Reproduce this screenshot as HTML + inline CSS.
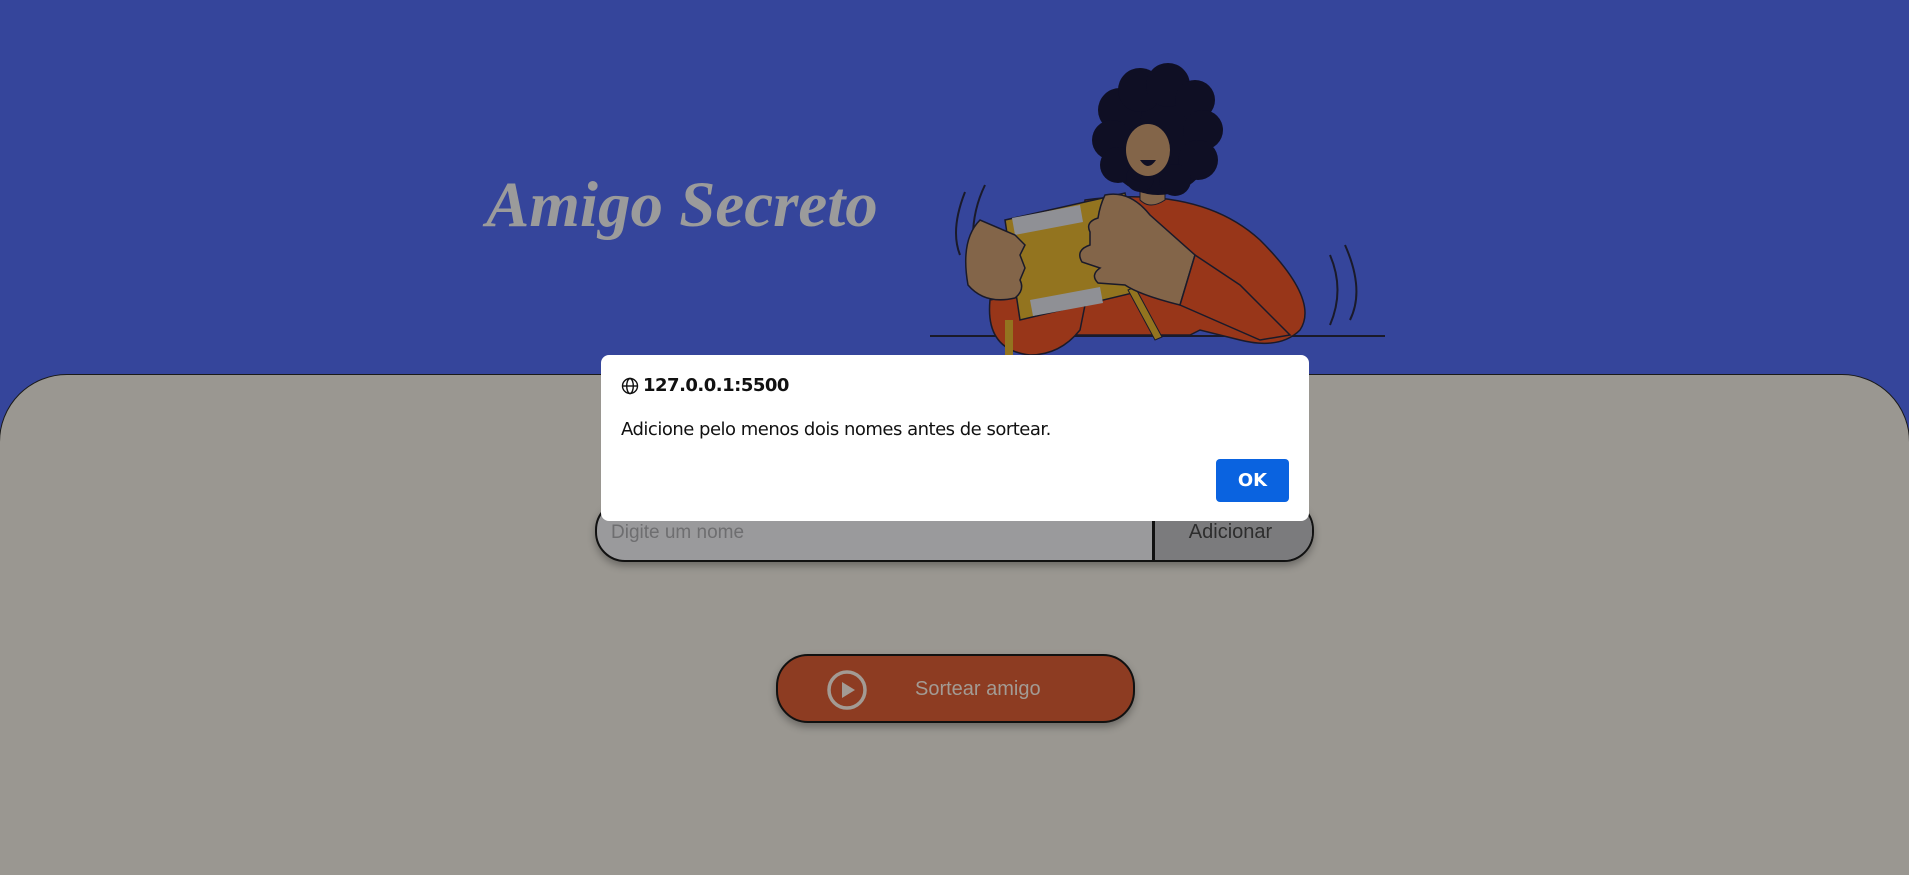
<!DOCTYPE html>
<html><head><meta charset="utf-8"><style>
*{margin:0;padding:0;box-sizing:border-box}
html,body{width:1909px;height:875px;overflow:hidden}
body{background:#35459b;position:relative;font-family:"Liberation Sans",sans-serif}
.main{position:absolute;left:-1px;top:374px;width:1911px;height:540px;background:#9a9791;border:1px solid #1a1a1a;border-radius:68px 68px 0 0}
h1{position:absolute;left:486px;top:168px;font-family:"Liberation Serif",serif;font-style:italic;font-weight:bold;font-size:65px;color:#9b9b9b}
.inp{position:absolute;left:595px;top:500px;width:719px;height:62px;border:2px solid #111;border-radius:30px;background:#9a9a9c;overflow:hidden;box-shadow:0 4px 8px rgba(0,0,0,.3)}
.inp span{position:absolute;left:14px;top:20px;font-size:19px;color:#6e6e70}
.inp .btn{position:absolute;left:555px;top:0;width:164px;height:100%;background:#7b7b7d;border-left:3px solid #111;text-align:center;line-height:60px;font-size:20px;color:#2d2d2d;padding-right:10px}
.sort{position:absolute;left:776px;top:654px;width:359px;height:69px;border:2px solid #111;border-radius:32px;background:#8d3c22;box-shadow:0 4px 8px rgba(0,0,0,.3)}
.sort .t{position:absolute;left:137px;top:22px;font-size:20px;color:#a39b94}
.dlg{position:absolute;left:601px;top:355px;width:708px;height:166px;background:#fff;border-radius:8px;font-family:"DejaVu Sans","Liberation Sans",sans-serif;color:#111}
.dlg .h{position:absolute;left:20px;top:20px;font-weight:bold;font-size:18px;display:flex;align-items:center;gap:4px;letter-spacing:-0.5px}
.dlg .m{position:absolute;left:20px;top:64px;font-size:18px;letter-spacing:-0.5px}
.ok{position:absolute;left:615px;top:104px;width:73px;height:43px;background:#0a63e0;border-radius:4px;color:#fff;font-weight:bold;font-size:18px;text-align:center;line-height:43px}
</style></head><body>
<h1>Amigo Secreto</h1>
<svg style="position:absolute;left:920px;top:60px" width="480" height="310" viewBox="920 60 480 310">
<g stroke="#1a1a2a" stroke-width="2" fill="none">
<path d="M965 192 Q950 230 960 255"/><path d="M985 185 Q968 220 975 260"/>
<path d="M1330 255 Q1345 290 1330 325"/><path d="M1345 245 Q1365 290 1350 320"/>
</g>
<line x1="930" y1="336" x2="1385" y2="336" stroke="#1a1a2a" stroke-width="2"/>
<path d="M1085 200 Q1200 185 1260 240 Q1320 300 1300 330 Q1280 350 1240 340 L1200 330 L1190 335 L1070 335 Z" fill="#983619" stroke="#1a1a2a" stroke-width="1.5"/>
<path d="M990 300 Q985 350 1030 355 Q1060 355 1080 330 L1090 280 Z" fill="#983619" stroke="#1a1a2a" stroke-width="1.5"/>
<path d="M1140 175 L1140 200 Q1150 210 1165 200 L1165 175 Z" fill="#836549" stroke="#1a1a2a" stroke-width="1"/>
<g fill="#0f0f24">
<circle cx="1158" cy="140" r="55"/>
<circle cx="1120" cy="110" r="22"/><circle cx="1140" cy="90" r="22"/><circle cx="1168" cy="85" r="22"/><circle cx="1195" cy="100" r="20"/>
<circle cx="1203" cy="130" r="20"/><circle cx="1198" cy="160" r="20"/><circle cx="1175" cy="180" r="16"/><circle cx="1112" cy="140" r="20"/><circle cx="1118" cy="165" r="18"/><circle cx="1140" cy="178" r="14"/>
</g>
<ellipse cx="1148" cy="150" rx="22" ry="26" fill="#836549"/>
<path d="M1140 160 Q1148 172 1156 160 Z" fill="#0f0f24"/>
<path d="M1005 220 L1125 193 L1145 290 L1020 320 Z" fill="#93741f" stroke="#1a1a2a" stroke-width="1.5"/>
<path d="M1012 218 L1080 205 L1083 222 L1015 235 Z" fill="#8f9095"/>
<path d="M1030 300 L1100 287 L1103 303 L1033 316 Z" fill="#8f9095"/>
<path d="M1005 320 L1005 355 L1013 355 L1013 320 Z" fill="#93741f"/>
<path d="M1128 290 L1155 340 L1162 337 L1135 287 Z" fill="#93741f" stroke="#1a1a2a" stroke-width="1"/>
<path d="M980 220 Q960 240 968 285 Q985 305 1015 298 Q1025 290 1020 280 L1025 268 L1020 255 L1025 245 L1015 235 Z" fill="#836549" stroke="#1a1a2a" stroke-width="1.5"/>
<path d="M1105 195 Q1130 190 1150 215 L1195 255 L1180 305 Q1140 295 1125 285 L1098 283 Q1090 275 1100 268 L1082 262 Q1075 250 1090 245 L1090 232 Q1085 222 1098 218 Q1100 205 1105 195 Z" fill="#836549" stroke="#1a1a2a" stroke-width="1.5"/>
<path d="M1195 255 L1180 305 L1260 340 L1290 335 L1240 285 Z" fill="#983619" stroke="#1a1a2a" stroke-width="1.5"/>
</svg>
<div class="main"></div>
<div class="inp"><span>Digite um nome</span><div class="btn">Adicionar</div></div>
<div class="sort">
<svg style="position:absolute;left:48px;top:13px" width="42" height="42" viewBox="0 0 42 42"><circle cx="21" cy="21" r="18" stroke="#a39b94" stroke-width="3.5" fill="none"/><path d="M16 13 L29 21 L16 29 Z" fill="#a39b94"/></svg>
<span class="t">Sortear amigo</span></div>
<div class="dlg">
<div class="h"><svg width="18" height="18" viewBox="0 0 18 18" fill="none" stroke="#111" stroke-width="1.4"><circle cx="9" cy="9" r="7.5"/><ellipse cx="9" cy="9" rx="3.3" ry="7.5"/><line x1="1.5" y1="9" x2="16.5" y2="9"/></svg>127.0.0.1:5500</div>
<div class="m">Adicione pelo menos dois nomes antes de sortear.</div>
<div class="ok">OK</div>
</div>
</body></html>
